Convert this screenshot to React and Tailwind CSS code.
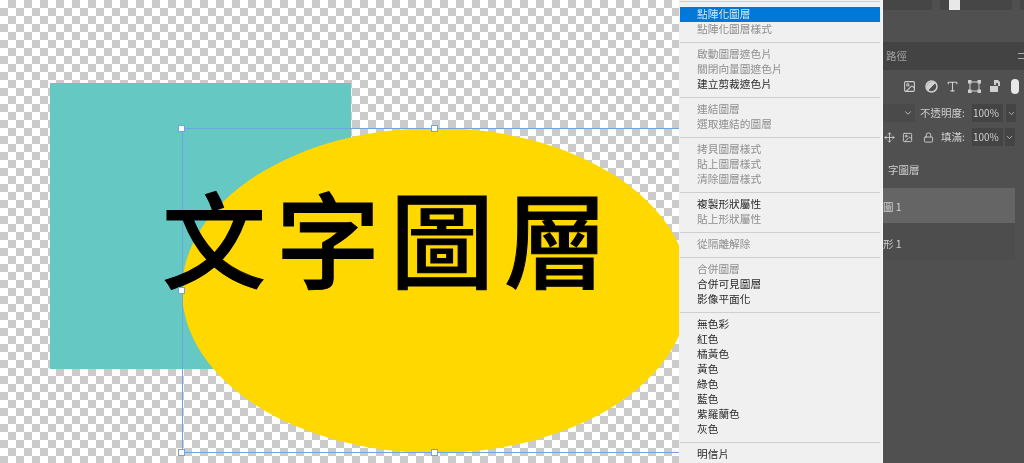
import React from 'react';
import { Image, Type, Lock, Move, ChevronDown } from 'lucide-react';

const groups = [
  [['點陣化圖層', 'sel'], ['點陣化圖層樣式', 'off']],
  [['啟動圖層遮色片', 'off'], ['關閉向量圖遮色片', 'off'], ['建立剪裁遮色片', 'on']],
  [['連結圖層', 'off'], ['選取連結的圖層', 'off']],
  [['拷貝圖層樣式', 'off'], ['貼上圖層樣式', 'off'], ['清除圖層樣式', 'off']],
  [['複製形狀屬性', 'on'], ['貼上形狀屬性', 'off']],
  [['從隔離解除', 'off']],
  [['合併圖層', 'off'], ['合併可見圖層', 'on'], ['影像平面化', 'on']],
  [['無色彩', 'on'], ['紅色', 'on'], ['橘黃色', 'on'], ['黃色', 'on'], ['綠色', 'on'], ['藍色', 'on'], ['紫羅蘭色', 'on'], ['灰色', 'on']],
  [['明信片', 'on']],
];

function Handle({ className }) {
  return <div className={`absolute w-[7px] h-[7px] bg-white border border-[#6fa4e0] ${className}`} />;
}

function MenuItem({ label, state }) {
  const color = state === 'sel' ? 'bg-[#0078d7] text-[#d5e6f7]' : state === 'on' ? 'text-[#2a2a2a]' : 'text-[#8e8e8e]';
  return <div className={`h-[15px] leading-[13px] pl-[17px] text-[10.7px] ${color}`}>{label}</div>;
}

function Menu() {
  return (
    <div className="w-[204px] shrink-0 h-full overflow-hidden bg-[#f0f0f0] pl-px pr-[2px] border-r border-[#f8f8f8]">
      <div className="h-[2px] mb-[5px] border-b border-[#cfcfcf]" />
      {groups.map((items, i) => (
        <div key={i}>
          {i > 0 && <div className="h-[10px] flex items-center"><div className="w-full h-px bg-[#cfcfcf]" /></div>}
          {items.map(([label, state]) => <MenuItem key={label} label={label} state={state} />)}
        </div>
      ))}
    </div>
  );
}

function ShapeIcon() {
  return (
    <svg width="13" height="13" viewBox="0 0 13 13" fill="none" stroke="currentColor">
      <rect x="2" y="2" width="9" height="9" />
      <rect x="0.5" y="0.5" width="2.5" height="2.5" fill="currentColor" />
      <rect x="10" y="0.5" width="2.5" height="2.5" fill="currentColor" />
      <rect x="0.5" y="10" width="2.5" height="2.5" fill="currentColor" />
      <rect x="10" y="10" width="2.5" height="2.5" fill="currentColor" />
    </svg>
  );
}

function HalfCircle() {
  return (
    <svg width="13" height="13" viewBox="0 0 13 13" fill="none" stroke="currentColor">
      <circle cx="6.5" cy="6.5" r="5.5" strokeWidth="1.5" />
      <path d="M3 10 L10 3 A5 5 0 0 0 3 10Z" fill="currentColor" />
    </svg>
  );
}

function SmartIcon() {
  return (
    <svg width="13" height="14" viewBox="0 0 13 14" fill="currentColor">
      <path d="M5 1h4l2 2v4H9V4H7V6H5z" />
      <rect x="1" y="7" width="8" height="6" />
    </svg>
  );
}

function Panel() {
  return (
    <div className="flex-1 h-full bg-[#505050] flex flex-col text-[#cfcfcf] text-[10.5px] overflow-hidden">
      <div className="h-[10px] flex gap-[8px] shrink-0">
        <div className="w-[49px] bg-[#464646]" />
        <div className="w-[72px] bg-[#464646] relative">
          <div className="absolute left-[9px] top-0 w-[11px] h-[10px] bg-[#e8e8e8]" />
        </div>
        <div className="flex-1 bg-[#464646]" />
      </div>
      <div className="h-[32px] shrink-0" />
      <div className="h-[28px] bg-[#434343] flex items-center shrink-0 pl-[3px] text-[#a0a0a0] justify-between">
        <span>路徑</span>
        <span className="w-[6px] h-[6px] border-y border-[#aaa]" />
      </div>
      <div className="h-[4px] shrink-0" />
      <div className="h-[24px] flex items-center gap-[8.5px] pl-[20px] shrink-0 text-[#cfcfcf]">
        <Image size={13} />
        <HalfCircle />
        <Type size={13} />
        <ShapeIcon />
        <SmartIcon />
        <div className="w-[8px] h-[15px] rounded-full bg-[#e8e8e8]" />
      </div>
      <div className="h-[24px] flex items-center shrink-0 mt-[3px]">
        <div className="w-[32px] h-[18px] bg-[#4a4a4a] flex items-center justify-end pr-[2px]"><ChevronDown size={10} /></div>
        <span className="ml-[5px] w-[48px] whitespace-nowrap">不透明度:</span>
        <span className="ml-[4px] w-[31px] h-[18px] leading-[18px] bg-[#444] pl-px text-[10px]">100%</span>
        <div className="ml-[3px] w-[10px] h-[18px] bg-[#444] flex items-center justify-center"><ChevronDown size={9} /></div>
      </div>
      <div className="h-[24px] flex items-center shrink-0">
        <div className="w-[12px] ml-px"><Move size={11} /></div>
        <div className="w-[12px] ml-[6px]"><Image size={11} /></div>
        <div className="w-[12px] ml-[9px]"><Lock size={11} /></div>
        <span className="ml-[6px] whitespace-nowrap">填滿:</span>
        <span className="ml-[7px] w-[31px] h-[18px] leading-[18px] bg-[#444] pl-px text-[10px]">100%</span>
        <div className="ml-[2px] w-[10px] h-[18px] bg-[#444] flex items-center justify-center"><ChevronDown size={9} /></div>
      </div>
      <div className="h-[39px] shrink-0 flex items-center pt-[2px] pl-[5px] whitespace-nowrap mr-[9px]">字圖層</div>
      <div className="h-[35px] bg-[#656565] shrink-0 flex items-center pt-[3px] mr-[9px]">圖 1</div>
      <div className="h-[37px] bg-[#4d4d4d] shrink-0 flex items-center pt-[4px] mr-[9px]">形 1</div>
    </div>
  );
}

export default function App() {
  return (
    <div className="w-[1024px] h-[463px] flex overflow-hidden blur-[0.4px] font-['Noto_Sans_CJK_TC','Noto_Sans',sans-serif]">
      <div className="relative w-[679px] shrink-0 h-full overflow-hidden bg-white bg-[repeating-conic-gradient(#cbcbcb_0_25%,#ffffff_0_50%)] bg-[length:16px_16px]">
        <div className="absolute left-[50px] top-[83px] w-[301px] h-[286px] bg-[#66c8c2]" />
        <div className="absolute left-[182px] top-[128px] w-[507px] h-[325px] rounded-[50%] bg-[#ffd800]" />
        <div className="absolute left-[182px] top-[128px] w-[507px] h-[325px] border border-[#6fa4e0]" />
        <div className="absolute left-[162px] top-[166px] text-[104px] leading-[140px] tracking-[10px] font-medium [-webkit-text-stroke:1px_#000] text-black whitespace-nowrap">文字圖層</div>
        <Handle className="left-[178px] top-[125px]" />
        <Handle className="left-[431px] top-[125px]" />
        <Handle className="left-[178px] top-[287px]" />
        <Handle className="left-[178px] top-[449px]" />
        <Handle className="left-[431px] top-[449px]" />
      </div>
      <Menu />
      <Panel />
    </div>
  );
}
